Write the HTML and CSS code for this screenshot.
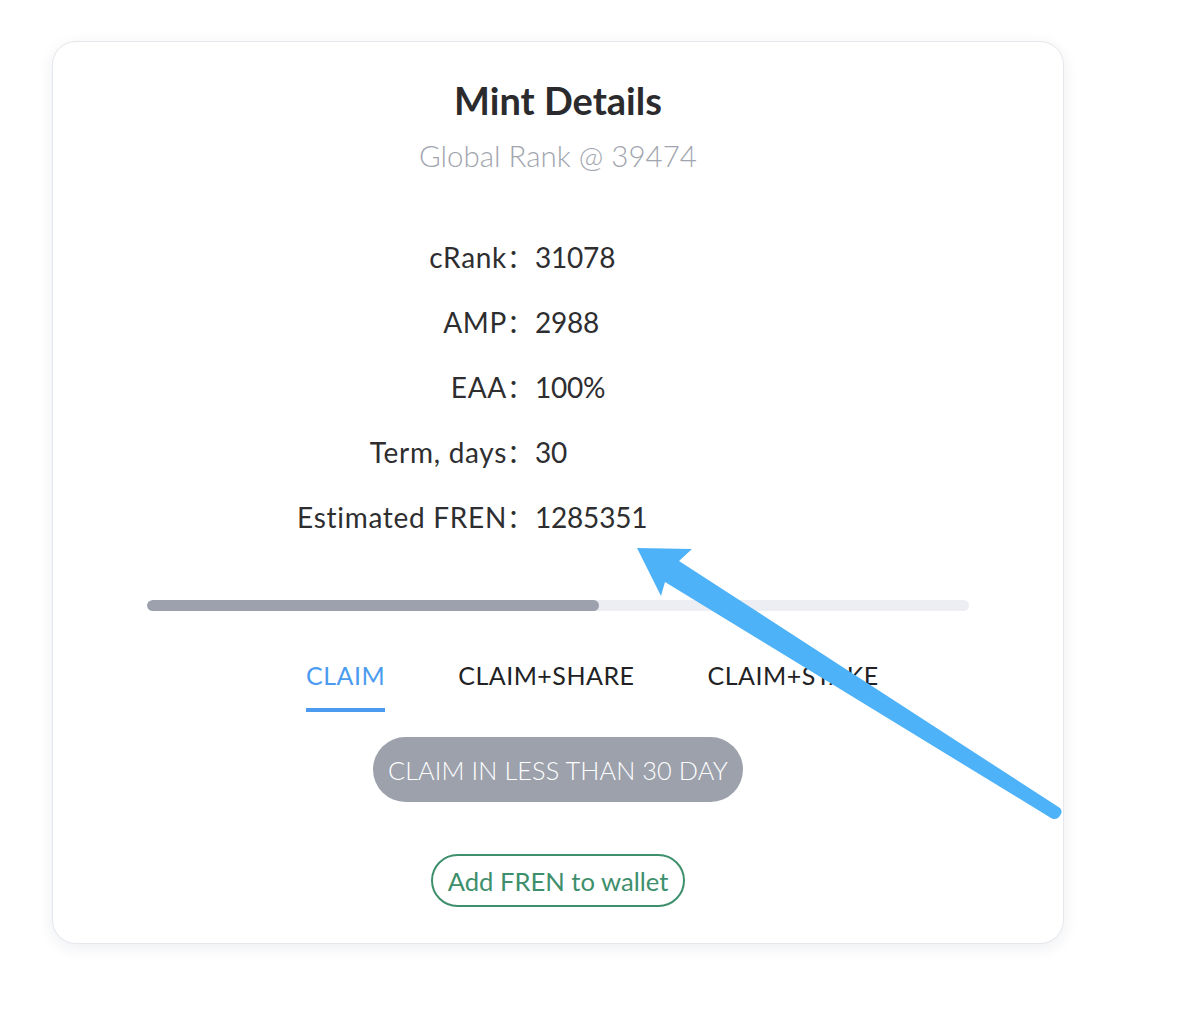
FILE: index.html
```
<!DOCTYPE html>
<html lang="en">
<head>
<meta charset="utf-8">
<title>Mint Details</title>
<link rel="stylesheet" href="styles.css">
</head>
<body>
<div class="page">
  <section class="card">
    <h1 class="title">Mint Details</h1>
    <p class="subtitle">Global Rank @ 39474</p>
    <div class="details">
      <span class="label">cRank</span><span class="colon">：</span><span class="value">31078</span>
      <span class="label">AMP</span><span class="colon">：</span><span class="value">2988</span>
      <span class="label">EAA</span><span class="colon">：</span><span class="value">100%</span>
      <span class="label">Term, days</span><span class="colon">：</span><span class="value">30</span>
      <span class="label">Estimated FREN</span><span class="colon">：</span><span class="value">1285351</span>
    </div>
    <div class="progress"><div class="progress-fill" style="width:55%"></div></div>
    <nav class="tabs">
      <span class="tab active">CLAIM</span>
      <span class="tab">CLAIM+SHARE</span>
      <span class="tab">CLAIM+STAKE</span>
    </nav>
    <div class="actions">
      <button class="btn-claim">CLAIM IN LESS THAN 30 DAY</button>
      <button class="btn-wallet">Add FREN to wallet</button>
    </div>
  </section>
  <svg class="arrow" width="1200" height="1011" viewBox="0 0 1200 1011">
    <path d="M637 548 L692 549 L679 561 L1060 808 Q1064 812 1058 818 Q1054 820 1051 818 L665 582 L661 596 Z" fill="#4db2f8"/>
  </svg>
</div>
</body>
</html>
```
FILE: styles.css
```
* { box-sizing: border-box; }
html, body { margin: 0; padding: 0; background: #ffffff; }
body { font-family: Lato, "Noto Sans", sans-serif; color: #2e2e30; }
.page { position: relative; width: 1200px; height: 1011px; padding: 41px 0 0 52px; }
.card {
  width: 1012px;
  height: 903px;
  border: 1px solid #e6e7ec;
  border-radius: 24px;
  background: #fff;
  box-shadow: 0 4px 16px rgba(30, 40, 80, 0.08);
  padding-top: 35px;
  display: flex;
  flex-direction: column;
}
.title {
  margin: 0;
  text-align: center;
  font-size: 38px;
  line-height: 46px;
  font-weight: 700;
  color: #2b2b2d;
}
.subtitle {
  margin: 15px 0 0;
  text-align: center;
  font-size: 29.5px;
  line-height: 36px;
  font-weight: 300;
  color: #a1a5ae;
}
.details {
  margin-top: 50px;
  display: grid;
  grid-template-columns: 454px 28px auto;
  grid-auto-rows: 65px;
  align-items: center;
  font-size: 28px;
  color: #2e2e30;
}
.label { text-align: right; letter-spacing: 0.7px; }
.value { letter-spacing: -0.2px; }
.colon { font-family: "Noto Sans CJK SC", sans-serif; font-size: 26px; text-align: left; }
.progress {
  margin: 51px 94px 0;
  height: 11px;
  border-radius: 6px;
  background: #edeef3;
  overflow: hidden;
}
.progress-fill { height: 100%; background: #9ca1ad; border-radius: 6px; }
.tabs {
  margin: 49px 0 0 253px;
  display: flex;
  gap: 73px;
}
.tab {
  font-size: 25px;
  line-height: 30px;
  letter-spacing: 0.5px;
  padding-bottom: 18px;
  border-bottom: 4px solid transparent;
  color: #222225;
}
.tab.active { color: #4b9cf0; border-bottom-color: #4b9cf0; }
.actions { display: flex; flex-direction: column; align-items: center; }
.btn-claim {
  margin-top: 25px;
  width: 370px;
  height: 65px;
  border: none;
  border-radius: 33px;
  background: #9ca1ac;
  color: #ffffff;
  font-family: Lato, sans-serif;
  font-size: 25.3px;
  letter-spacing: 0.1px;
  font-weight: 300;
}
.btn-wallet {
  margin-top: 52px;
  width: 254px;
  height: 53px;
  border: 2px solid #3e8f6c;
  border-radius: 27px;
  background: #fff;
  color: #3e8f6c;
  font-family: Lato, sans-serif;
  font-size: 25.6px;
  letter-spacing: 0;
}
.arrow { position: absolute; left: 0; top: 0; pointer-events: none; }
```
